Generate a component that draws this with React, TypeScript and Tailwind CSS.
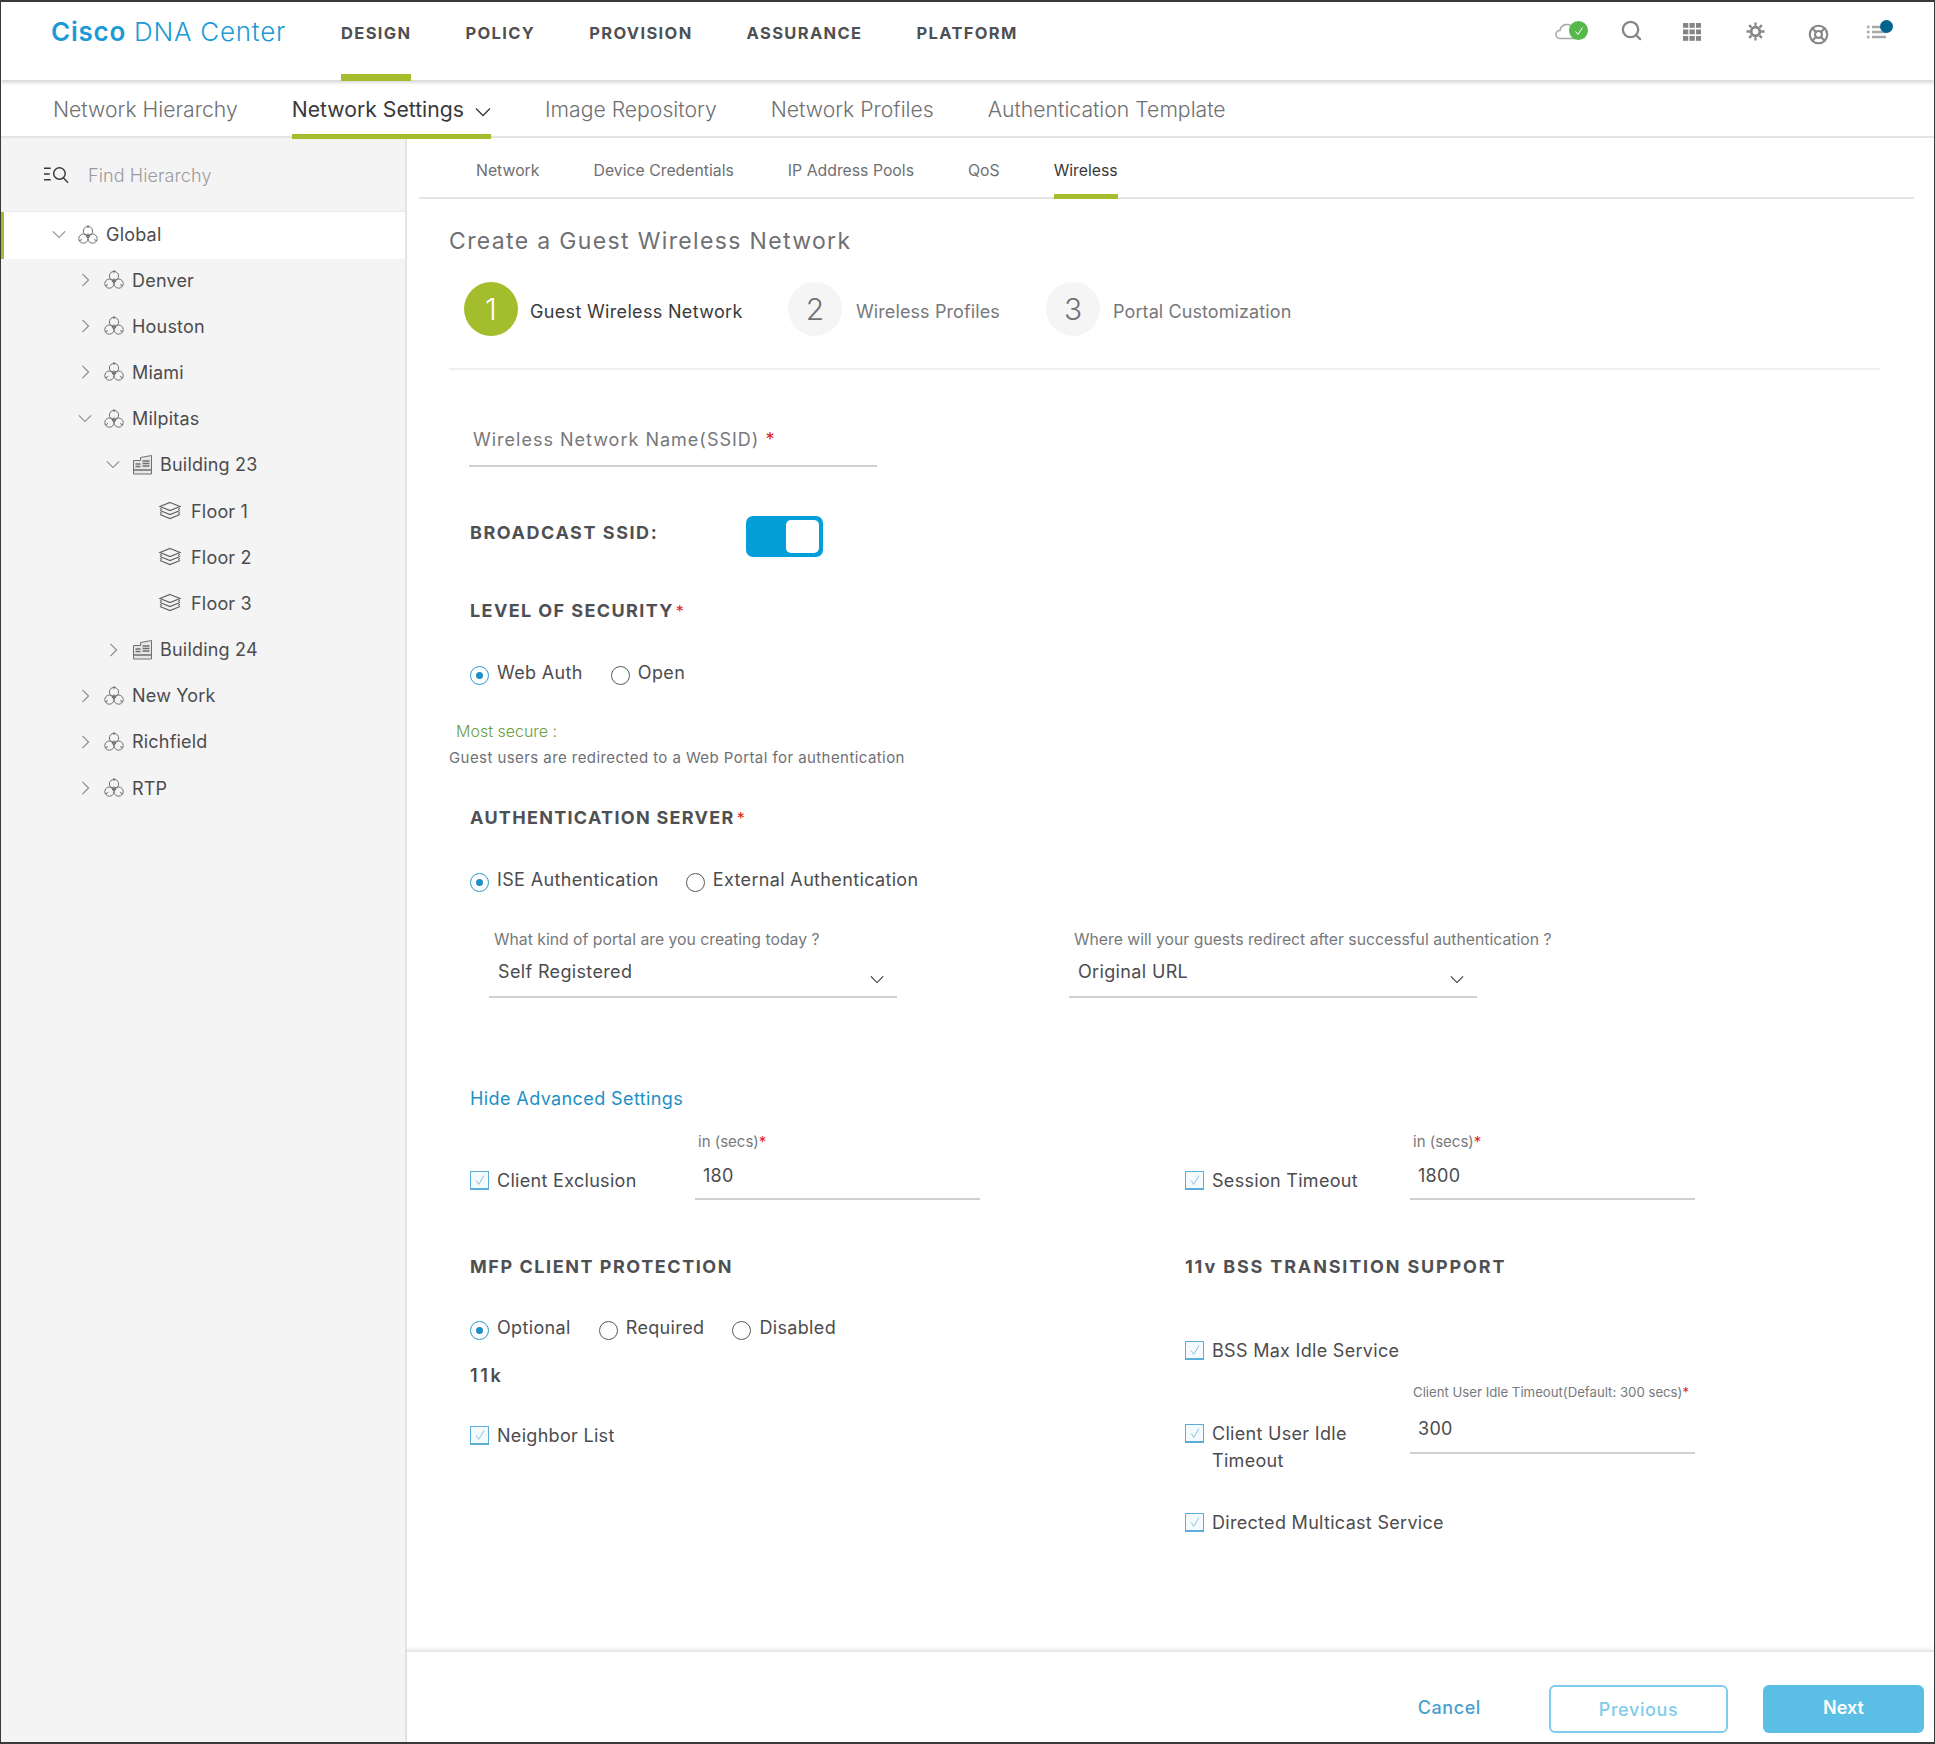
import { LifeBuoy, Search } from 'lucide-react'

const topNav = ['DESIGN', 'POLICY', 'PROVISION', 'ASSURANCE', 'PLATFORM']
const tabs = ['Network', 'Device Credentials', 'IP Address Pools', 'QoS', 'Wireless']

type TreeRow = { label: string; kind: 'site' | 'building' | 'floor'; open?: boolean }

const tree: TreeRow[] = [
  { label: 'Denver', kind: 'site' },
  { label: 'Houston', kind: 'site' },
  { label: 'Miami', kind: 'site' },
  { label: 'Milpitas', kind: 'site', open: true },
  { label: 'Building 23', kind: 'building', open: true },
  { label: 'Floor 1', kind: 'floor' },
  { label: 'Floor 2', kind: 'floor' },
  { label: 'Floor 3', kind: 'floor' },
  { label: 'Building 24', kind: 'building' },
  { label: 'New York', kind: 'site' },
  { label: 'Richfield', kind: 'site' },
  { label: 'RTP', kind: 'site' },
]

function ChevDown({ className }: { className: string }) {
  return (
    <svg viewBox="0 0 16 10" className={className} fill="none" stroke="currentColor" strokeWidth="1.3">
      <path d="M1 1.5l7 7 7-7" />
    </svg>
  )
}

function ChevRight({ className }: { className: string }) {
  return (
    <svg viewBox="0 0 10 16" className={className} fill="none" stroke="currentColor" strokeWidth="1.3">
      <path d="M1.5 1l7 7-7 7" />
    </svg>
  )
}

function SiteIcon() {
  return (
    <svg viewBox="0 0 22 22" className="w-[22px] h-[22px] shrink-0" fill="none" stroke="#6f7073" strokeWidth="1">
      <circle cx="11" cy="7" r="4.6" />
      <circle cx="6.4" cy="14.6" r="4.6" />
      <circle cx="15.6" cy="14.6" r="4.6" />
      <circle cx="11" cy="11.8" r="1.8" />
      <path d="M11 1v3M2 17l3-1.5M20 17l-3-1.5" />
    </svg>
  )
}

function BuildingIcon() {
  return (
    <svg viewBox="0 0 22 22" className="w-[22px] h-[22px] shrink-0" fill="none" stroke="#6f7073" strokeWidth="1">
      <path d="M1.5 20V6.5h7V3.5l11-2V20z" fill="#e6e6e6" />
      <path d="M10.5 7h7M10.5 9.5h7M10.5 12h7M3.5 10h5M3.5 12.5h5M2 16h17" strokeWidth="1.5" />
    </svg>
  )
}

function FloorIcon() {
  return (
    <svg viewBox="0 0 24 20" className="w-6 h-5 shrink-0" fill="none" stroke="#5f6063" strokeWidth="1.2">
      <path d="M12 1.5l10 4-10 4-10-4z" />
      <path d="M2 7.5l2 1M22 7.5l-2 1M2 9.5l10 4 10-4" />
      <path d="M2 11.5l2 1M22 11.5l-2 1M2 13.5l10 4 10-4" />
    </svg>
  )
}

function Radio({ label, checked }: { label: string; checked?: boolean }) {
  return (
    <div className="flex items-start gap-2">
      <span
        className={`mt-[6px] w-[19px] h-[19px] rounded-full border flex items-center justify-center ${
          checked ? 'border-[#2a9bd0]' : 'border-[#58585b]'
        }`}
      >
        {checked && <span className="w-[7px] h-[7px] rounded-full bg-[#1d8fc6]" />}
      </span>
      <span className="text-[18px] leading-[26px] tracking-[0.35px] text-[#4c4c4e]">{label}</span>
    </div>
  )
}

function Checkbox({ lines }: { lines: string[] }) {
  return (
    <div className="flex items-start gap-2">
      <span className="mt-[4px] w-[19px] h-[19px] shrink-0 border border-b-2 border-[#5aaed8] bg-[#f4fafd] flex items-center justify-center">
        <svg viewBox="0 0 16 16" className="w-[14px] h-[14px]" fill="none" stroke="#7fb9d8" strokeWidth="1">
          <path d="M3.5 8.5l3 4.5 6-10" />
        </svg>
      </span>
      <span className="text-[18px] leading-[27px] tracking-[0.3px] text-[#4c4c4e]">
        {lines.map((l) => (
          <span key={l} className="block whitespace-nowrap">
            {l}
          </span>
        ))}
      </span>
    </div>
  )
}

function SectionTitle({
  children,
  star,
  tracking = 'tracking-[1.55px]',
}: {
  children: string
  star?: boolean
  tracking?: string
}) {
  return (
    <div className={`h-6 text-[18px] leading-6 font-bold text-[#4f5053] whitespace-nowrap ${tracking}`}>
      {children}
      {star && <span className="ml-[2px] text-[16px] font-normal text-[#e2231a]">*</span>}
    </div>
  )
}

function NumberField({ hint, value, small }: { hint: string; value: string; small?: boolean }) {
  return (
    <div className={`w-[285px] border-b-2 border-[#cfcfcf] ${small ? 'h-[72px]' : 'h-[68px]'}`}>
      <div
        className={`h-5 leading-5 pl-[3px] whitespace-nowrap text-[#77787b] ${small ? 'text-[13.2px]' : 'text-[15px]'}`}
      >
        {hint}
        <span className="text-[#e2231a]">*</span>
      </div>
      <div className={`pl-2 text-[18px] leading-6 tracking-[0.3px] text-[#4c4c4e] ${small ? 'mt-[15px]' : 'mt-[12px]'}`}>
        {value}
      </div>
    </div>
  )
}

function SelectField({ label, value }: { label: string; value: string }) {
  return (
    <div className="w-[408px]">
      <div className="h-5 leading-5 pl-[5px] text-[15.75px] text-[#77787b] whitespace-nowrap">{label}</div>
      <div className="h-[48px] border-b-2 border-[#cfcfcf] flex items-start justify-between pl-[9px] pr-[13px]">
        <span className="mt-[10px] text-[18px] leading-6 tracking-[0.35px] text-[#4c4c4e]">{value}</span>
        <ChevDown className="mt-[25px] w-[14px] h-[9px] text-[#39393b]" />
      </div>
    </div>
  )
}

export default function App() {
  return (
    <div className="w-[1935px] h-[1744px] border-x border-t-2 border-b-2 border-[#3a3a3a] bg-white flex flex-col overflow-hidden font-['Inter',sans-serif] text-[#4c4c4e]">
      {/* Top bar */}
      <header className="h-[78px] shrink-0 flex items-start shadow-[0_3px_3px_rgba(0,0,0,0.14)] relative z-10">
        <div className="mt-[12px] ml-[50px] w-[290px] text-[26px] leading-9 text-[#1d9ad6] tracking-[0.75px] whitespace-nowrap">
          <span className="font-semibold">Cisco</span> <span className="font-light">DNA Center</span>
        </div>
        <nav className="flex gap-[54px]">
          {topNav.map((item, i) => (
            <div key={item} className="relative h-[78px] pt-[19px]">
              <span className="text-[16.5px] leading-5 font-bold tracking-[1.35px] text-[#4f5053]">{item}</span>
              {i === 0 && <div className="absolute left-0 right-0 bottom-[-1px] h-[7px] bg-[#a4bd2d]" />}
            </div>
          ))}
        </nav>
        <div className="ml-auto mr-[41px] mt-[18px] flex items-start text-[#858688]">
          <div className="relative w-[34px] h-[22px]">
            <svg viewBox="0 0 34 22" className="w-[34px] h-[22px]" fill="none" stroke="#a7a9ab" strokeWidth="1.6">
              <path d="M5 18.5a4 4 0 0 1 0-8 7 7 0 0 1 13-2.5M5 18.5h18" />
            </svg>
            <span className="absolute right-[1px] top-[1px] w-[19px] h-[19px] rounded-full bg-[#56b84a] flex items-center justify-center">
              <svg viewBox="0 0 12 12" className="w-3 h-3" fill="none" stroke="#ffffff" strokeWidth="1">
                <path d="M2.5 6.5l2.5 3 4.5-7" />
              </svg>
            </span>
          </div>
          <Search className="ml-[31px] -mt-[1px] w-[23px] h-[23px]" strokeWidth={2.4} />
          <svg viewBox="0 0 18 18" className="ml-[40px] w-[18px] h-[18px] mt-[3px]" fill="#858688">
            {[0, 6.5, 13].map((y) =>
              [0, 6.5, 13].map((x) => <rect key={`${x}-${y}`} x={x} y={y} width="5.3" height="4.8" />)
            )}
          </svg>
          <svg viewBox="0 0 20 20" className="ml-[45px] w-[19px] h-[19px] mt-[2px]" fill="none" stroke="#858688">
            <circle cx="10" cy="10" r="4.6" strokeWidth="3" />
            <path
              d="M10 0.5v3.5M10 16v3.5M0.5 10H4M16 10h3.5M3.3 3.3l2.4 2.4M14.3 14.3l2.4 2.4M16.7 3.3l-2.4 2.4M5.7 14.3l-2.4 2.4"
              strokeWidth="2.4"
            />
          </svg>
          <LifeBuoy className="ml-[43px] mt-[4px] w-[21px] h-[21px]" strokeWidth={2.4} />
          <div className="relative ml-[38px] w-[26px] h-[20px] mt-[3px]">
            <svg viewBox="0 0 22 20" className="w-[22px] h-[20px]" stroke="#a7a9ab" strokeWidth="2.4" fill="none">
              <path d="M0 4h2.5M5 4h14M0 9h2.5M5 9h14M0 14h2.5M5 14h14" />
            </svg>
            <span className="absolute right-0 -top-[3px] w-[13px] h-[13px] rounded-full bg-[#00648f]" />
          </div>
        </div>
      </header>

      {/* Second level nav */}
      <nav className="h-[58px] shrink-0 pt-[3px] flex gap-[54px] pl-[52px] border-b-2 border-[#e4e4e4] text-[21.2px] text-[#6f7073] font-light">
        <div className="leading-[52px] whitespace-nowrap">Network Hierarchy</div>
        <div className="relative flex items-start gap-[11px] text-[#39393b] font-normal whitespace-nowrap">
          <span className="leading-[52px]">Network Settings</span>
          <ChevDown className="mt-[24px] w-[16px] h-[10px]" />
          <div className="absolute left-0 right-0 top-[51px] h-[5px] bg-[#a4bd2d]" />
        </div>
        <div className="leading-[52px] whitespace-nowrap">Image Repository</div>
        <div className="leading-[52px] whitespace-nowrap">Network Profiles</div>
        <div className="leading-[52px] whitespace-nowrap">Authentication Template</div>
      </nav>

      <div className="flex-1 flex min-h-0">
        {/* Hierarchy tree */}
        <aside className="w-[406px] shrink-0 bg-[#f4f4f4] border-r-2 border-[#e4e4e4]">
          <div className="h-[74px] border-b border-[#ececec] flex items-start pl-[43px] pt-[26px]">
            <svg viewBox="0 0 28 20" className="w-[27px] h-[20px]" fill="none" stroke="#39393b" strokeWidth="1.5">
              <path d="M0 4h7M0 10h6M0 16h7" />
              <circle cx="16" cy="9.5" r="6" />
              <path d="M20 14l5 5" />
            </svg>
            <span className="ml-[17px] text-[18px] leading-6 font-light tracking-[0.1px] text-[#9a9b9d]">Find Hierarchy</span>
          </div>
          <div className="relative h-[47px] bg-white border-l-[3px] border-[#a4bd2d] flex items-center pb-[2px] pl-[47px] -mb-[2px]">
            <span className="w-4 flex justify-center text-[#8a8b8d]">
              <ChevDown className="w-[14px] h-[9px]" />
            </span>
            <div className="ml-[10px] mr-[7px]">
              <SiteIcon />
            </div>
            <span className="text-[18px] tracking-[0.2px]">Global</span>
          </div>
          {tree.map((row) => (
            <div
              key={row.label}
              className={`h-[46.2px] flex items-center text-[18px] tracking-[0.2px] ${
                row.kind === 'site' ? 'pl-[76px]' : row.kind === 'building' ? 'pl-[104px]' : 'pl-[157px]'
              }`}
            >
              {row.kind !== 'floor' && (
                <span className="w-4 flex justify-center text-[#8a8b8d]">
                  {row.open ? <ChevDown className="w-[14px] h-[9px]" /> : <ChevRight className="w-[9px] h-[14px]" />}
                </span>
              )}
              {row.kind === 'site' && (
                <div className="ml-[10px] mr-[7px]">
                  <SiteIcon />
                </div>
              )}
              {row.kind === 'building' && (
                <div className="ml-[11px] mr-[6px]">
                  <BuildingIcon />
                </div>
              )}
              {row.kind === 'floor' && (
                <div className="mr-[9px]">
                  <FloorIcon />
                </div>
              )}
              <span>{row.label}</span>
            </div>
          ))}
        </aside>

        {/* Main panel */}
        <main className="flex-1 min-w-0 flex flex-col">
          <div className="flex-1 min-h-0">
            <div className="ml-[12px] mr-[20px] h-[61px] pl-[57px] flex gap-[54px] border-b-2 border-[#e4e4e4] text-[15.8px] text-[#6f7073]">
              {tabs.map((t) => (
                <div
                  key={t}
                  className={`relative pt-[23px] leading-5 whitespace-nowrap ${t === 'Wireless' ? 'text-[#39393b]' : ''}`}
                >
                  {t}
                  {t === 'Wireless' && <div className="absolute left-0 right-0 bottom-[-2px] h-[5px] bg-[#a4bd2d]" />}
                </div>
              ))}
            </div>

            <div className="ml-[42px] w-[1431px]">
              <h1 className="mt-[27px] h-[30px] text-[23px] leading-[30px] font-normal tracking-[1.35px] text-[#6f7073]">
                Create a Guest Wireless Network
              </h1>

              <div className="mt-[26px] pl-[15px] flex items-center h-[54px]">
                <div className="w-[54px] h-[54px] rounded-full bg-[#a4bd2d] flex items-center justify-center text-[30px] font-light text-white">
                  1
                </div>
                <span className="ml-[12px] pt-[4px] w-[258px] text-[18px] tracking-[0.33px] text-[#39393b]">
                  Guest Wireless Network
                </span>
                <div className="w-[54px] h-[54px] rounded-full bg-[#f5f5f5] flex items-center justify-center text-[30px] font-light text-[#6f7073]">
                  2
                </div>
                <span className="ml-[14px] pt-[4px] w-[190px] text-[18px] tracking-[0.1px] text-[#77787b]">Wireless Profiles</span>
                <div className="w-[54px] h-[54px] rounded-full bg-[#f5f5f5] flex items-center justify-center text-[30px] font-light text-[#6f7073]">
                  3
                </div>
                <span className="ml-[13px] pt-[4px] text-[18px] tracking-[0.1px] text-[#77787b]">Portal Customization</span>
              </div>

              <div className="mt-[32px] h-[2px] bg-[#efefef]" />

              <div className="mt-[51px] ml-[20px] w-[408px] h-[46px] pl-1 pt-[7px] border-b-2 border-[#cfcfcf] text-[18px] leading-6 tracking-[1px] text-[#77787b]">
                Wireless Network Name(SSID) <span className="text-[#e2231a]">*</span>
              </div>

              <div className="mt-[49px] ml-[21px] h-[41px] flex items-start">
                <div className="w-[276px] mt-[5px]">
                  <SectionTitle>BROADCAST SSID:</SectionTitle>
                </div>
                <div className="w-[77px] h-[41px] rounded-[7px] bg-[#049fd9] flex justify-end p-[4px]">
                  <div className="w-[33px] h-[33px] rounded-[5px] bg-white" />
                </div>
              </div>

              <div className="mt-[42px] ml-[21px]">
                <SectionTitle star tracking="tracking-[1.4px]">
                  LEVEL OF SECURITY
                </SectionTitle>
              </div>

              <div className="mt-[37px] ml-[21px] h-[26px] flex gap-[28px]">
                <Radio label="Web Auth" checked />
                <Radio label="Open" />
              </div>

              <div className="mt-[35px] ml-[7px] h-5 leading-5 text-[16px] font-light text-[#6aa03a]">Most secure :</div>
              <div className="mt-[7px] h-5 leading-5 text-[15px] tracking-[0.43px] text-[#6f7073]">
                Guest users are redirected to a Web Portal for authentication
              </div>

              <div className="mt-[38px] ml-[21px]">
                <SectionTitle star tracking="tracking-[1.3px]">
                  AUTHENTICATION SERVER
                </SectionTitle>
              </div>

              <div className="mt-[37px] ml-[21px] h-[26px] flex gap-[27px]">
                <Radio label="ISE Authentication" checked />
                <Radio label="External Authentication" />
              </div>

              <div className="mt-[37px] ml-[40px] flex gap-[172px]">
                <SelectField label="What kind of portal are you creating today ?" value="Self Registered" />
                <SelectField label="Where will your guests redirect after successful authentication ?" value="Original URL" />
              </div>

              <div className="mt-[89px] ml-[21px] h-6 leading-6 text-[18px] tracking-[0.4px] text-[#1d8fc6]">
                Hide Advanced Settings
              </div>

              <div className="ml-[21px] mt-[21px] grid grid-cols-[715px_1fr]">
                <div>
                  <div className="flex items-end w-[510px] justify-between">
                    <div className="mb-[6px]">
                      <Checkbox lines={['Client Exclusion']} />
                    </div>
                    <NumberField hint="in (secs)" value="180" />
                  </div>
                  <div className="mt-[55px]">
                    <SectionTitle>MFP CLIENT PROTECTION</SectionTitle>
                  </div>
                  <div className="mt-[36px] h-[26px] flex gap-[28px]">
                    <Radio label="Optional" checked />
                    <Radio label="Required" />
                    <Radio label="Disabled" />
                  </div>
                  <div className="mt-[23px] h-6 leading-6 text-[18px] font-semibold tracking-[2.6px]">11k</div>
                  <div className="mt-[34px]">
                    <Checkbox lines={['Neighbor List']} />
                  </div>
                </div>
                <div>
                  <div className="flex items-end w-[510px] justify-between">
                    <div className="mb-[6px]">
                      <Checkbox lines={['Session Timeout']} />
                    </div>
                    <NumberField hint="in (secs)" value="1800" />
                  </div>
                  <div className="mt-[55px]">
                    <SectionTitle tracking="tracking-[1.85px]">11v BSS TRANSITION SUPPORT</SectionTitle>
                  </div>
                  <div className="mt-[58px]">
                    <Checkbox lines={['BSS Max Idle Service']} />
                  </div>
                  <div className="mt-[18px] flex items-start w-[510px] justify-between">
                    <div className="mt-[38px]">
                      <Checkbox lines={['Client User Idle', 'Timeout']} />
                    </div>
                    <NumberField hint="Client User Idle Timeout(Default: 300 secs)" value="300" small />
                  </div>
                  <div className="mt-[35px]">
                    <Checkbox lines={['Directed Multicast Service']} />
                  </div>
                </div>
              </div>
            </div>
          </div>

          {/* Footer actions */}
          <footer className="h-[92px] shrink-0 border-t-2 border-[#e8e8e8] shadow-[0_-2px_3px_rgba(0,0,0,0.05)] flex items-start justify-end pt-[33px] pr-[10px] gap-[35px]">
            <span className="mt-[11px] mr-[33px] text-[18px] leading-6 font-medium tracking-[0.6px] text-[#4a9fd0]">Cancel</span>
            <div className="w-[179px] h-[48px] rounded-[6px] border-2 border-[#7fcdea] flex items-center justify-center text-[18px] font-medium tracking-[0.6px] text-[#7fcdea]">
              Previous
            </div>
            <div className="w-[161px] h-[48px] pb-1 rounded-[6px] bg-[#5bbfe5] flex items-center justify-center text-[18px] font-semibold text-white">
              Next
            </div>
          </footer>
        </main>
      </div>
    </div>
  )
}
